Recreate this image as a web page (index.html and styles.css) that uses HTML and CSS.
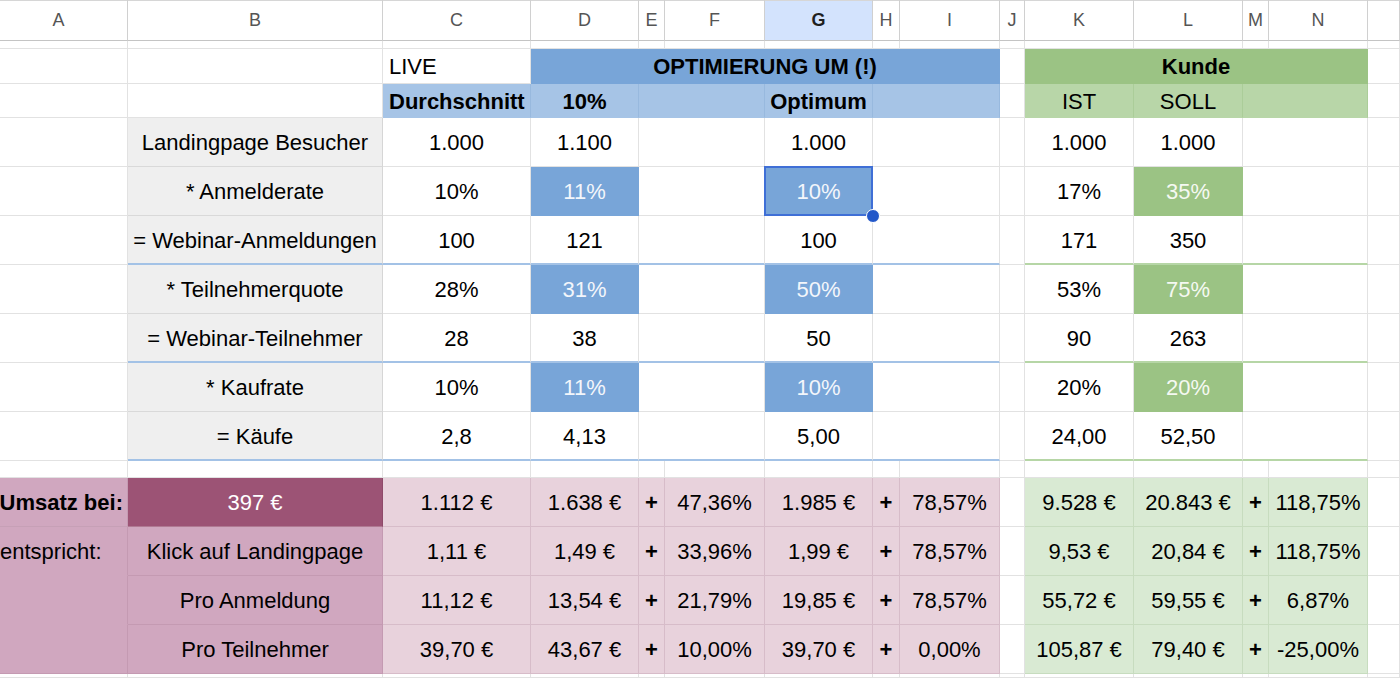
FILE: index.html
```html
<!DOCTYPE html>
<html lang="de">
<head>
<meta charset="utf-8">
<title>Sheet</title>
<link rel="stylesheet" href="styles.css">
</head>
<body>
<div class="sheet">
  <!-- column header -->
  <div class="c h ha">A</div><div class="c h">B</div><div class="c h">C</div><div class="c h">D</div><div class="c h">E</div><div class="c h">F</div><div class="c h hs">G</div><div class="c h">H</div><div class="c h">I</div><div class="c h">J</div><div class="c h">K</div><div class="c h">L</div><div class="c h">M</div><div class="c h">N</div><div class="c h"></div>

  <!-- row 1 (thin) -->
  <div class="c"></div><div class="c"></div><div class="c"></div><div class="c"></div><div class="c"></div><div class="c"></div><div class="c"></div><div class="c"></div><div class="c"></div><div class="c"></div><div class="c"></div><div class="c"></div><div class="c"></div><div class="c"></div><div class="c"></div>

  <!-- LIVE row -->
  <div class="c"></div><div class="c"></div>
  <div class="c l">LIVE</div>
  <div class="c b1 bold s6">OPTIMIERUNG UM (!)</div>
  <div class="c"></div>
  <div class="c g1 bold s4">Kunde</div>
  <div class="c"></div>

  <!-- Durchschnitt row -->
  <div class="c"></div><div class="c"></div>
  <div class="c b2 bold l">Durchschnitt</div>
  <div class="c b2 bold">10%</div>
  <div class="c b2 s2"></div>
  <div class="c b2 bold">Optimum</div>
  <div class="c b2 s2"></div>
  <div class="c"></div>
  <div class="c g2">IST</div>
  <div class="c g2">SOLL</div>
  <div class="c g2 s2"></div>
  <div class="c"></div>

  <!-- Landingpage Besucher -->
  <div class="c"></div>
  <div class="c lab">Landingpage Besucher</div>
  <div class="c">1.000</div><div class="c">1.100</div><div class="c s2"></div><div class="c">1.000</div><div class="c s2"></div>
  <div class="c"></div>
  <div class="c">1.000</div><div class="c">1.000</div><div class="c s2"></div>
  <div class="c"></div>

  <!-- Anmelderate -->
  <div class="c"></div>
  <div class="c lab">* Anmelderate</div>
  <div class="c">10%</div><div class="c bv">11%</div><div class="c s2"></div><div class="c bv sel">10%<span class="handle"></span></div><div class="c s2"></div>
  <div class="c"></div>
  <div class="c">17%</div><div class="c gv">35%</div><div class="c s2"></div>
  <div class="c"></div>

  <!-- Webinar-Anmeldungen -->
  <div class="c"></div>
  <div class="c lab sb">= Webinar-Anmeldungen</div>
  <div class="c sb">100</div><div class="c sb">121</div><div class="c s2 sb"></div><div class="c sb">100</div><div class="c s2 sb"></div>
  <div class="c"></div>
  <div class="c sg">171</div><div class="c sg">350</div><div class="c s2 sg"></div>
  <div class="c"></div>

  <!-- Teilnehmerquote -->
  <div class="c"></div>
  <div class="c lab">* Teilnehmerquote</div>
  <div class="c">28%</div><div class="c bv">31%</div><div class="c s2"></div><div class="c bv">50%</div><div class="c s2"></div>
  <div class="c"></div>
  <div class="c">53%</div><div class="c gv">75%</div><div class="c s2"></div>
  <div class="c"></div>

  <!-- Webinar-Teilnehmer -->
  <div class="c"></div>
  <div class="c lab sb">= Webinar-Teilnehmer</div>
  <div class="c sb">28</div><div class="c sb">38</div><div class="c s2 sb"></div><div class="c sb">50</div><div class="c s2 sb"></div>
  <div class="c"></div>
  <div class="c sg">90</div><div class="c sg">263</div><div class="c s2 sg"></div>
  <div class="c"></div>

  <!-- Kaufrate -->
  <div class="c"></div>
  <div class="c lab">* Kaufrate</div>
  <div class="c">10%</div><div class="c bv">11%</div><div class="c s2"></div><div class="c bv">10%</div><div class="c s2"></div>
  <div class="c"></div>
  <div class="c">20%</div><div class="c gv">20%</div><div class="c s2"></div>
  <div class="c"></div>

  <!-- Käufe -->
  <div class="c"></div>
  <div class="c lab sb">= Käufe</div>
  <div class="c sb">2,8</div><div class="c sb">4,13</div><div class="c s2 sb"></div><div class="c sb">5,00</div><div class="c s2 sb"></div>
  <div class="c"></div>
  <div class="c sg">24,00</div><div class="c sg">52,50</div><div class="c s2 sg"></div>
  <div class="c"></div>

  <!-- thin spacer row -->
  <div class="c"></div><div class="c"></div><div class="c"></div><div class="c"></div><div class="c"></div><div class="c"></div><div class="c"></div><div class="c"></div><div class="c"></div><div class="c"></div><div class="c"></div><div class="c"></div><div class="c"></div><div class="c"></div><div class="c"></div>

  <!-- Umsatz bei -->
  <div class="c pm bold r pm-top">Umsatz bei:</div>
  <div class="c pd">397 €</div>
  <div class="c pk">1.112 €</div><div class="c pk">1.638 €</div><div class="c pk bold">+</div><div class="c pk">47,36%</div><div class="c pk">1.985 €</div><div class="c pk bold">+</div><div class="c pk">78,57%</div>
  <div class="c"></div>
  <div class="c gl">9.528 €</div><div class="c gl">20.843 €</div><div class="c gl bold">+</div><div class="c gl">118,75%</div>
  <div class="c"></div>

  <!-- entspricht -->
  <div class="c pm pa l0">entspricht:</div>
  <div class="c pm">Klick auf Landingpage</div>
  <div class="c pk">1,11 €</div><div class="c pk">1,49 €</div><div class="c pk bold">+</div><div class="c pk">33,96%</div><div class="c pk">1,99 €</div><div class="c pk bold">+</div><div class="c pk">78,57%</div>
  <div class="c"></div>
  <div class="c gl">9,53 €</div><div class="c gl">20,84 €</div><div class="c gl bold">+</div><div class="c gl">118,75%</div>
  <div class="c"></div>

  <!-- Pro Anmeldung -->
  <div class="c pm pa"></div>
  <div class="c pm">Pro Anmeldung</div>
  <div class="c pk">11,12 €</div><div class="c pk">13,54 €</div><div class="c pk bold">+</div><div class="c pk">21,79%</div><div class="c pk">19,85 €</div><div class="c pk bold">+</div><div class="c pk">78,57%</div>
  <div class="c"></div>
  <div class="c gl">55,72 €</div><div class="c gl">59,55 €</div><div class="c gl bold">+</div><div class="c gl">6,87%</div>
  <div class="c"></div>

  <!-- Pro Teilnehmer -->
  <div class="c pm"></div>
  <div class="c pm">Pro Teilnehmer</div>
  <div class="c pk">39,70 €</div><div class="c pk">43,67 €</div><div class="c pk bold">+</div><div class="c pk">10,00%</div><div class="c pk">39,70 €</div><div class="c pk bold">+</div><div class="c pk">0,00%</div>
  <div class="c"></div>
  <div class="c gl">105,87 €</div><div class="c gl">79,40 €</div><div class="c gl bold">+</div><div class="c gl">-25,00%</div>
  <div class="c"></div>

  <!-- last partial row -->
  <div class="c"></div><div class="c"></div><div class="c"></div><div class="c"></div><div class="c"></div><div class="c"></div><div class="c"></div><div class="c"></div><div class="c"></div><div class="c"></div><div class="c"></div><div class="c"></div><div class="c"></div><div class="c"></div><div class="c"></div>
</div>
</body>
</html>
```
FILE: styles.css
```css
html, body {
  margin: 0;
  padding: 0;
  background: #ffffff;
  overflow: hidden;
}

.sheet {
  display: grid;
  width: 1400px;
  height: 678px;
  grid-template-columns: 128px 255px 148px 108px 26px 100px 108px 27px 100px 25px 109px 109px 26px 99px 1fr;
  grid-template-rows: 41px 8px 35px 34px repeat(7, 49px) 17px repeat(4, 49px) 1fr;
  font-family: "Liberation Sans", Arial, sans-serif;
  font-size: 22px;
  color: #000000;
  overflow: hidden;
}

.c {
  box-sizing: border-box;
  border-right: 1px solid #e2e2e2;
  border-bottom: 1px solid #e2e2e2;
  display: flex;
  align-items: center;
  justify-content: center;
  padding-top: 2px;
  white-space: nowrap;
  overflow: hidden;
  min-width: 0;
}

/* column header */
.h {
  padding-top: 0;
  font-size: 18px;
  color: #555555;
  border-right-color: #d0d0d0;
  border-bottom-color: #c4c4c4;
  box-shadow: inset 0 1px 0 #d6d6d6;
}
.ha { padding-right: 10px; }
.hs {
  background: #d3e3fd;
  color: #1f1f1f;
  font-weight: bold;
}

.bold { font-weight: bold; }
.l { justify-content: flex-start; padding-left: 6px; }
.r { justify-content: flex-end; padding-right: 4px; }
.l0 { justify-content: flex-start; padding-left: 0; }

.s2 { grid-column: span 2; }
.s4 { grid-column: span 4; }
.s6 { grid-column: span 6; }

/* blue group */
.b1 {
  background: #78a5d8;
  border-right-color: #78a5d8;
  border-bottom-color: #78a5d8;
}
.b2 {
  background: #a6c4e6;
  border-right-color: #98b9de;
  border-bottom-color: #a6c4e6;
}
.bv {
  background: #78a5d8;
  color: #f3f6fb;
  border-right-color: #78a5d8;
  border-bottom-color: #78a5d8;
}

/* green group */
.g1 {
  background: #9bc384;
  border-right-color: #9bc384;
  border-bottom-color: #9bc384;
}
.g2 {
  background: #b8d6a8;
  border-right-color: #abcd99;
  border-bottom-color: #b8d6a8;
}
.gv {
  background: #9bc384;
  color: #f5f9f2;
  border-right-color: #9bc384;
  border-bottom-color: #9bc384;
}

/* labels */
.lab {
  background: #efefef;
  border-right-color: #d6d6d6;
  border-bottom-color: #d9d9d9;
}

/* thick separators */
.sb { border-bottom: 2px solid #a3c2e6; }
.sg { border-bottom: 2px solid #b6d6a6; }

/* selection */
.sel {
  position: relative;
  overflow: visible;
  z-index: 2;
}
.sel::after {
  content: "";
  position: absolute;
  left: -1px;
  top: -1px;
  right: -1px;
  bottom: -1px;
  border: 2px solid #3f6fd6;
}
.handle {
  position: absolute;
  right: -8px;
  bottom: -8px;
  width: 12px;
  height: 12px;
  border-radius: 50%;
  background: #2257c9;
  border: 1px solid #ffffff;
  z-index: 3;
}

/* bottom section */
.pm {
  background: #d0a7bf;
  border-right-color: #c49ab2;
  border-bottom-color: #c49ab2;
}
.pa { border-bottom-color: #d0a7bf; }
.pm-top { border-bottom-color: #c6a0b6; }
.pd {
  background: #9c5375;
  color: #ffffff;
  border-right-color: #8f4a6a;
  border-bottom-color: #b07a93;
}
.pk {
  background: #e8d2dc;
  border-right-color: #d7bcc9;
  border-bottom-color: #d7bcc9;
}
.gl {
  background: #d9ead3;
  border-right-color: #c7dcbf;
  border-bottom-color: #c7dcbf;
}
```
